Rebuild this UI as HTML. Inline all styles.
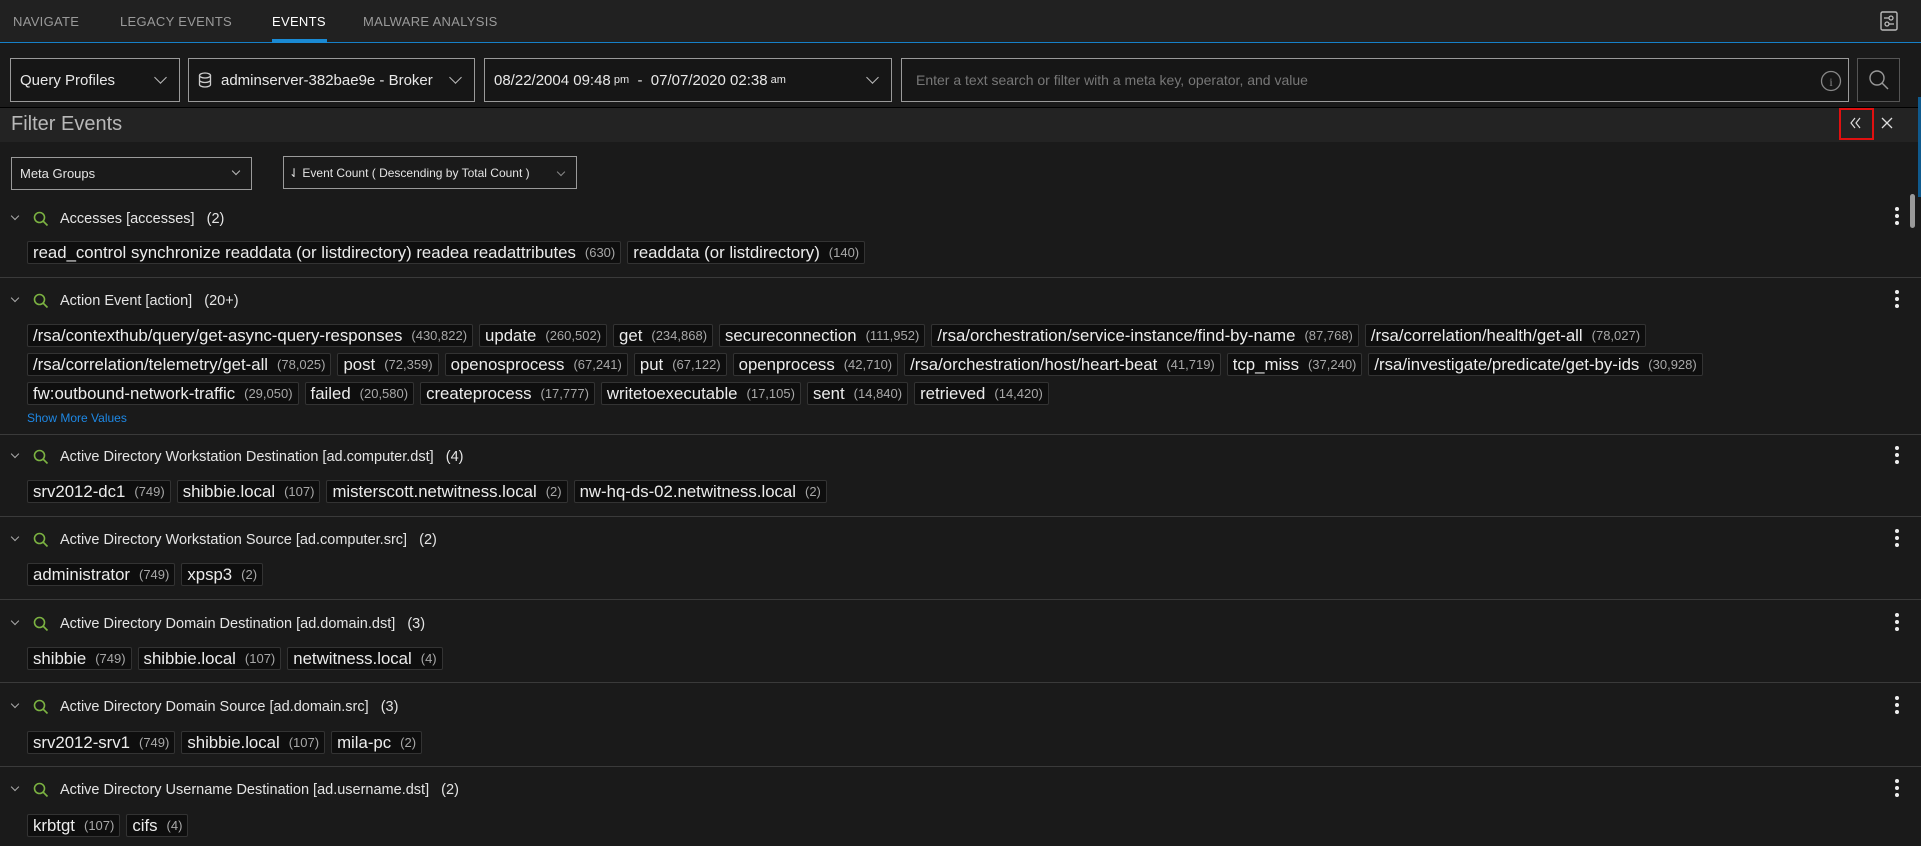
<!DOCTYPE html>
<html><head><meta charset="utf-8"><style>
*{box-sizing:border-box;margin:0;padding:0}
body{width:1921px;height:846px;overflow:hidden;background:#1a1a1a;font-family:"Liberation Sans",sans-serif;color:#e4e4e4;position:relative}
.abs{position:absolute}
.nav{left:0;top:0;width:1921px;height:43px;background:#212121;border-bottom:1px solid #1680c8}
.tab{top:14px;font-size:13px;color:#9a9a9a;letter-spacing:0.3px}
.box{border:1px solid #9a9a9a;background:#161616;height:44px;top:58px;font-size:15px;color:#e8e8e8;display:flex;align-items:center;padding-left:9px}
.chev{position:absolute;right:14px;top:14px;width:9px;height:9px;border-right:1.5px solid #bbb;border-bottom:1.5px solid #bbb;transform:rotate(45deg)}
.fbar{left:0;top:107px;width:1921px;height:35px;background:#232323;border-top:1px solid #000}
.dd{border:1px solid #9a9a9a;height:33px;top:157px;font-size:13px;display:flex;align-items:center;padding-left:8px}
.hdr{left:0;font-size:14.5px;height:20px;display:flex;align-items:center}
.hdr .c{position:absolute;left:12px;top:4px;width:6px;height:6px;border-right:1.3px solid #aaa;border-bottom:1.3px solid #aaa;transform:rotate(45deg)}
.hdr svg{position:absolute;left:33px;top:2px}
.hdr span.t{position:absolute;left:60px;white-space:nowrap}
.row{left:27px;display:flex;gap:6px;white-space:nowrap}
.p{height:23px;background:#0e0e0e;border:1px solid #333;border-radius:2px;padding:0 5px;font-size:16.8px;display:flex;align-items:center;color:#ececec}
.p i{font-style:normal;font-size:13px;color:#a8a8a8;margin-left:9px}
.sep{left:0;width:1921px;height:1px;background:#3a3a3a}
.keb{left:1895px;width:4px}
.keb b{display:block;width:4px;height:4px;border-radius:2px;background:#eee;margin-bottom:3px}
</style></head><body>
<div class="abs nav"></div>
<div class="abs tab" style="left:13px">NAVIGATE</div>
<div class="abs tab" style="left:120px">LEGACY EVENTS</div>
<div class="abs tab" style="left:272px;color:#fff">EVENTS</div>
<div class="abs" style="left:272px;top:39px;width:55px;height:4px;background:#1a8ad4"></div>
<div class="abs tab" style="left:363px">MALWARE ANALYSIS</div>
<svg class="abs" style="left:1880px;top:11px" width="18" height="20" viewBox="0 0 18 20"><rect x="1" y="1" width="16" height="18" rx="1.5" fill="none" stroke="#bbb" stroke-width="1.4"/><circle cx="11" cy="7" r="2" fill="none" stroke="#bbb" stroke-width="1.3"/><line x1="4" y1="7" x2="9" y2="7" stroke="#bbb" stroke-width="1.3"/><circle cx="7" cy="13" r="2" fill="none" stroke="#bbb" stroke-width="1.3"/><line x1="9" y1="13" x2="14" y2="13" stroke="#bbb" stroke-width="1.3"/></svg>

<div class="abs box" style="left:10px;width:170px">Query Profiles<span class="chev"></span></div>
<div class="abs box" style="left:188px;width:287px"><svg width="14" height="16" viewBox="0 0 14 16" style="margin-right:9px"><ellipse cx="7" cy="3.5" rx="5.5" ry="2.5" fill="none" stroke="#ccc" stroke-width="1.3"/><path d="M1.5 3.5v9c0 1.4 2.5 2.5 5.5 2.5s5.5-1.1 5.5-2.5v-9M1.5 8c0 1.4 2.5 2.5 5.5 2.5s5.5-1.1 5.5-2.5" fill="none" stroke="#ccc" stroke-width="1.3"/></svg>adminserver-382bae9e - Broker<span class="chev"></span></div>
<div class="abs box" style="left:484px;width:408px">08/22/2004 09:48<small style="font-size:11px">&nbsp;pm</small>&nbsp;&nbsp;-&nbsp;&nbsp;07/07/2020 02:38<small style="font-size:11px">&nbsp;am</small><span class="chev"></span></div>
<div class="abs box" style="left:901px;width:948px;color:#777;font-size:14px;padding-left:14px">Enter a text search or filter with a meta key, operator, and value
<svg class="abs" style="right:6px;top:11px" width="22" height="22"><circle cx="11" cy="11" r="9.5" fill="none" stroke="#888" stroke-width="1.3"/><text x="11" y="16" font-size="12" fill="#888" text-anchor="middle" font-family="Liberation Serif">i</text></svg></div>
<div class="abs box" style="left:1857px;width:43px;border-color:#555;padding:0;justify-content:center"><svg width="22" height="22"><circle cx="9" cy="9" r="7" fill="none" stroke="#999" stroke-width="1.4"/><line x1="14" y1="14" x2="20" y2="20" stroke="#999" stroke-width="1.4"/></svg></div>

<div class="abs fbar"></div>
<div class="abs" style="left:11px;top:113px;font-size:20px;color:#b8b8b8">Filter Events</div>
<div class="abs" style="left:1839px;top:108px;width:35px;height:32px;border:2px solid #e01010"></div>
<svg class="abs" style="left:1849px;top:116px" width="14" height="14"><path d="M6 2L2 7l4 5M11 2L7 7l4 5" fill="none" stroke="#ddd" stroke-width="1.2"/></svg>
<svg class="abs" style="left:1881px;top:117px" width="12" height="12"><path d="M1 1l10 10M11 1L1 11" stroke="#ddd" stroke-width="1.3"/></svg>
<div class="abs" style="left:1918px;top:97px;width:3px;height:100px;background:#0f5a8e"></div>
<div class="abs" style="left:1910px;top:194px;width:5px;height:34px;border-radius:3px;background:#999"></div>

<div class="abs dd" style="left:11px;width:241px">Meta Groups<span class="chev" style="top:10px;right:12px;width:6px;height:6px;border-width:1px"></span></div>
<div class="abs dd" style="left:283px;width:294px;top:156px;padding-left:5px;font-size:12px">⇃ Event Count ( Descending by Total Count )<span class="chev" style="top:12px;right:12px;width:6px;height:6px;border-width:1px;border-color:#888"></span></div>

<div class="abs hdr" style="top:209px;width:100%"><span class="c"></span><svg width="16" height="16"><circle cx="6.5" cy="6.5" r="5" fill="none" stroke="#7cb342" stroke-width="1.6"/><line x1="10" y1="10" x2="14.5" y2="14.5" stroke="#7cb342" stroke-width="1.6"/></svg><span class="t">Accesses [accesses]&nbsp;&nbsp;&nbsp;(2)</span></div>
<div class="abs keb" style="top:207px"><b></b><b></b><b></b></div>
<div class="abs row" style="top:241px"><div class="p">read_control synchronize readdata (or listdirectory) readea readattributes<i>(630)</i></div><div class="p">readdata (or listdirectory)<i>(140)</i></div></div>
<div class="abs sep" style="top:277px"></div>

<div class="abs hdr" style="top:291px;width:100%"><span class="c"></span><svg width="16" height="16"><circle cx="6.5" cy="6.5" r="5" fill="none" stroke="#7cb342" stroke-width="1.6"/><line x1="10" y1="10" x2="14.5" y2="14.5" stroke="#7cb342" stroke-width="1.6"/></svg><span class="t">Action Event [action]&nbsp;&nbsp;&nbsp;(20+)</span></div>
<div class="abs keb" style="top:290px"><b></b><b></b><b></b></div>
<div class="abs row" style="top:324px"><div class="p">/rsa/contexthub/query/get-async-query-responses<i>(430,822)</i></div><div class="p">update<i>(260,502)</i></div><div class="p">get<i>(234,868)</i></div><div class="p">secureconnection<i>(111,952)</i></div><div class="p">/rsa/orchestration/service-instance/find-by-name<i>(87,768)</i></div><div class="p">/rsa/correlation/health/get-all<i>(78,027)</i></div></div>
<div class="abs row" style="top:353px"><div class="p">/rsa/correlation/telemetry/get-all<i>(78,025)</i></div><div class="p">post<i>(72,359)</i></div><div class="p">openosprocess<i>(67,241)</i></div><div class="p">put<i>(67,122)</i></div><div class="p">openprocess<i>(42,710)</i></div><div class="p">/rsa/orchestration/host/heart-beat<i>(41,719)</i></div><div class="p">tcp_miss<i>(37,240)</i></div><div class="p">/rsa/investigate/predicate/get-by-ids<i>(30,928)</i></div></div>
<div class="abs row" style="top:382px"><div class="p">fw:outbound-network-traffic<i>(29,050)</i></div><div class="p">failed<i>(20,580)</i></div><div class="p">createprocess<i>(17,777)</i></div><div class="p">writetoexecutable<i>(17,105)</i></div><div class="p">sent<i>(14,840)</i></div><div class="p">retrieved<i>(14,420)</i></div></div>
<div class="abs" style="left:27px;top:411px;font-size:12px;color:#1e88e5">Show More Values</div>
<div class="abs sep" style="top:434px"></div>

<div class="abs hdr" style="top:447px;width:100%"><span class="c"></span><svg width="16" height="16"><circle cx="6.5" cy="6.5" r="5" fill="none" stroke="#7cb342" stroke-width="1.6"/><line x1="10" y1="10" x2="14.5" y2="14.5" stroke="#7cb342" stroke-width="1.6"/></svg><span class="t">Active Directory Workstation Destination [ad.computer.dst]&nbsp;&nbsp;&nbsp;(4)</span></div>
<div class="abs keb" style="top:446px"><b></b><b></b><b></b></div>
<div class="abs row" style="top:480px"><div class="p">srv2012-dc1<i>(749)</i></div><div class="p">shibbie.local<i>(107)</i></div><div class="p">misterscott.netwitness.local<i>(2)</i></div><div class="p">nw-hq-ds-02.netwitness.local<i>(2)</i></div></div>
<div class="abs sep" style="top:516px"></div>

<div class="abs hdr" style="top:530px;width:100%"><span class="c"></span><svg width="16" height="16"><circle cx="6.5" cy="6.5" r="5" fill="none" stroke="#7cb342" stroke-width="1.6"/><line x1="10" y1="10" x2="14.5" y2="14.5" stroke="#7cb342" stroke-width="1.6"/></svg><span class="t">Active Directory Workstation Source [ad.computer.src]&nbsp;&nbsp;&nbsp;(2)</span></div>
<div class="abs keb" style="top:529px"><b></b><b></b><b></b></div>
<div class="abs row" style="top:563px"><div class="p">administrator<i>(749)</i></div><div class="p">xpsp3<i>(2)</i></div></div>
<div class="abs sep" style="top:599px"></div>

<div class="abs hdr" style="top:614px;width:100%"><span class="c"></span><svg width="16" height="16"><circle cx="6.5" cy="6.5" r="5" fill="none" stroke="#7cb342" stroke-width="1.6"/><line x1="10" y1="10" x2="14.5" y2="14.5" stroke="#7cb342" stroke-width="1.6"/></svg><span class="t">Active Directory Domain Destination [ad.domain.dst]&nbsp;&nbsp;&nbsp;(3)</span></div>
<div class="abs keb" style="top:613px"><b></b><b></b><b></b></div>
<div class="abs row" style="top:647px"><div class="p">shibbie<i>(749)</i></div><div class="p">shibbie.local<i>(107)</i></div><div class="p">netwitness.local<i>(4)</i></div></div>
<div class="abs sep" style="top:682px"></div>

<div class="abs hdr" style="top:697px;width:100%"><span class="c"></span><svg width="16" height="16"><circle cx="6.5" cy="6.5" r="5" fill="none" stroke="#7cb342" stroke-width="1.6"/><line x1="10" y1="10" x2="14.5" y2="14.5" stroke="#7cb342" stroke-width="1.6"/></svg><span class="t">Active Directory Domain Source [ad.domain.src]&nbsp;&nbsp;&nbsp;(3)</span></div>
<div class="abs keb" style="top:696px"><b></b><b></b><b></b></div>
<div class="abs row" style="top:731px"><div class="p">srv2012-srv1<i>(749)</i></div><div class="p">shibbie.local<i>(107)</i></div><div class="p">mila-pc<i>(2)</i></div></div>
<div class="abs sep" style="top:766px"></div>

<div class="abs hdr" style="top:780px;width:100%"><span class="c"></span><svg width="16" height="16"><circle cx="6.5" cy="6.5" r="5" fill="none" stroke="#7cb342" stroke-width="1.6"/><line x1="10" y1="10" x2="14.5" y2="14.5" stroke="#7cb342" stroke-width="1.6"/></svg><span class="t">Active Directory Username Destination [ad.username.dst]&nbsp;&nbsp;&nbsp;(2)</span></div>
<div class="abs keb" style="top:779px"><b></b><b></b><b></b></div>
<div class="abs row" style="top:814px"><div class="p">krbtgt<i>(107)</i></div><div class="p">cifs<i>(4)</i></div></div>
</body></html>
